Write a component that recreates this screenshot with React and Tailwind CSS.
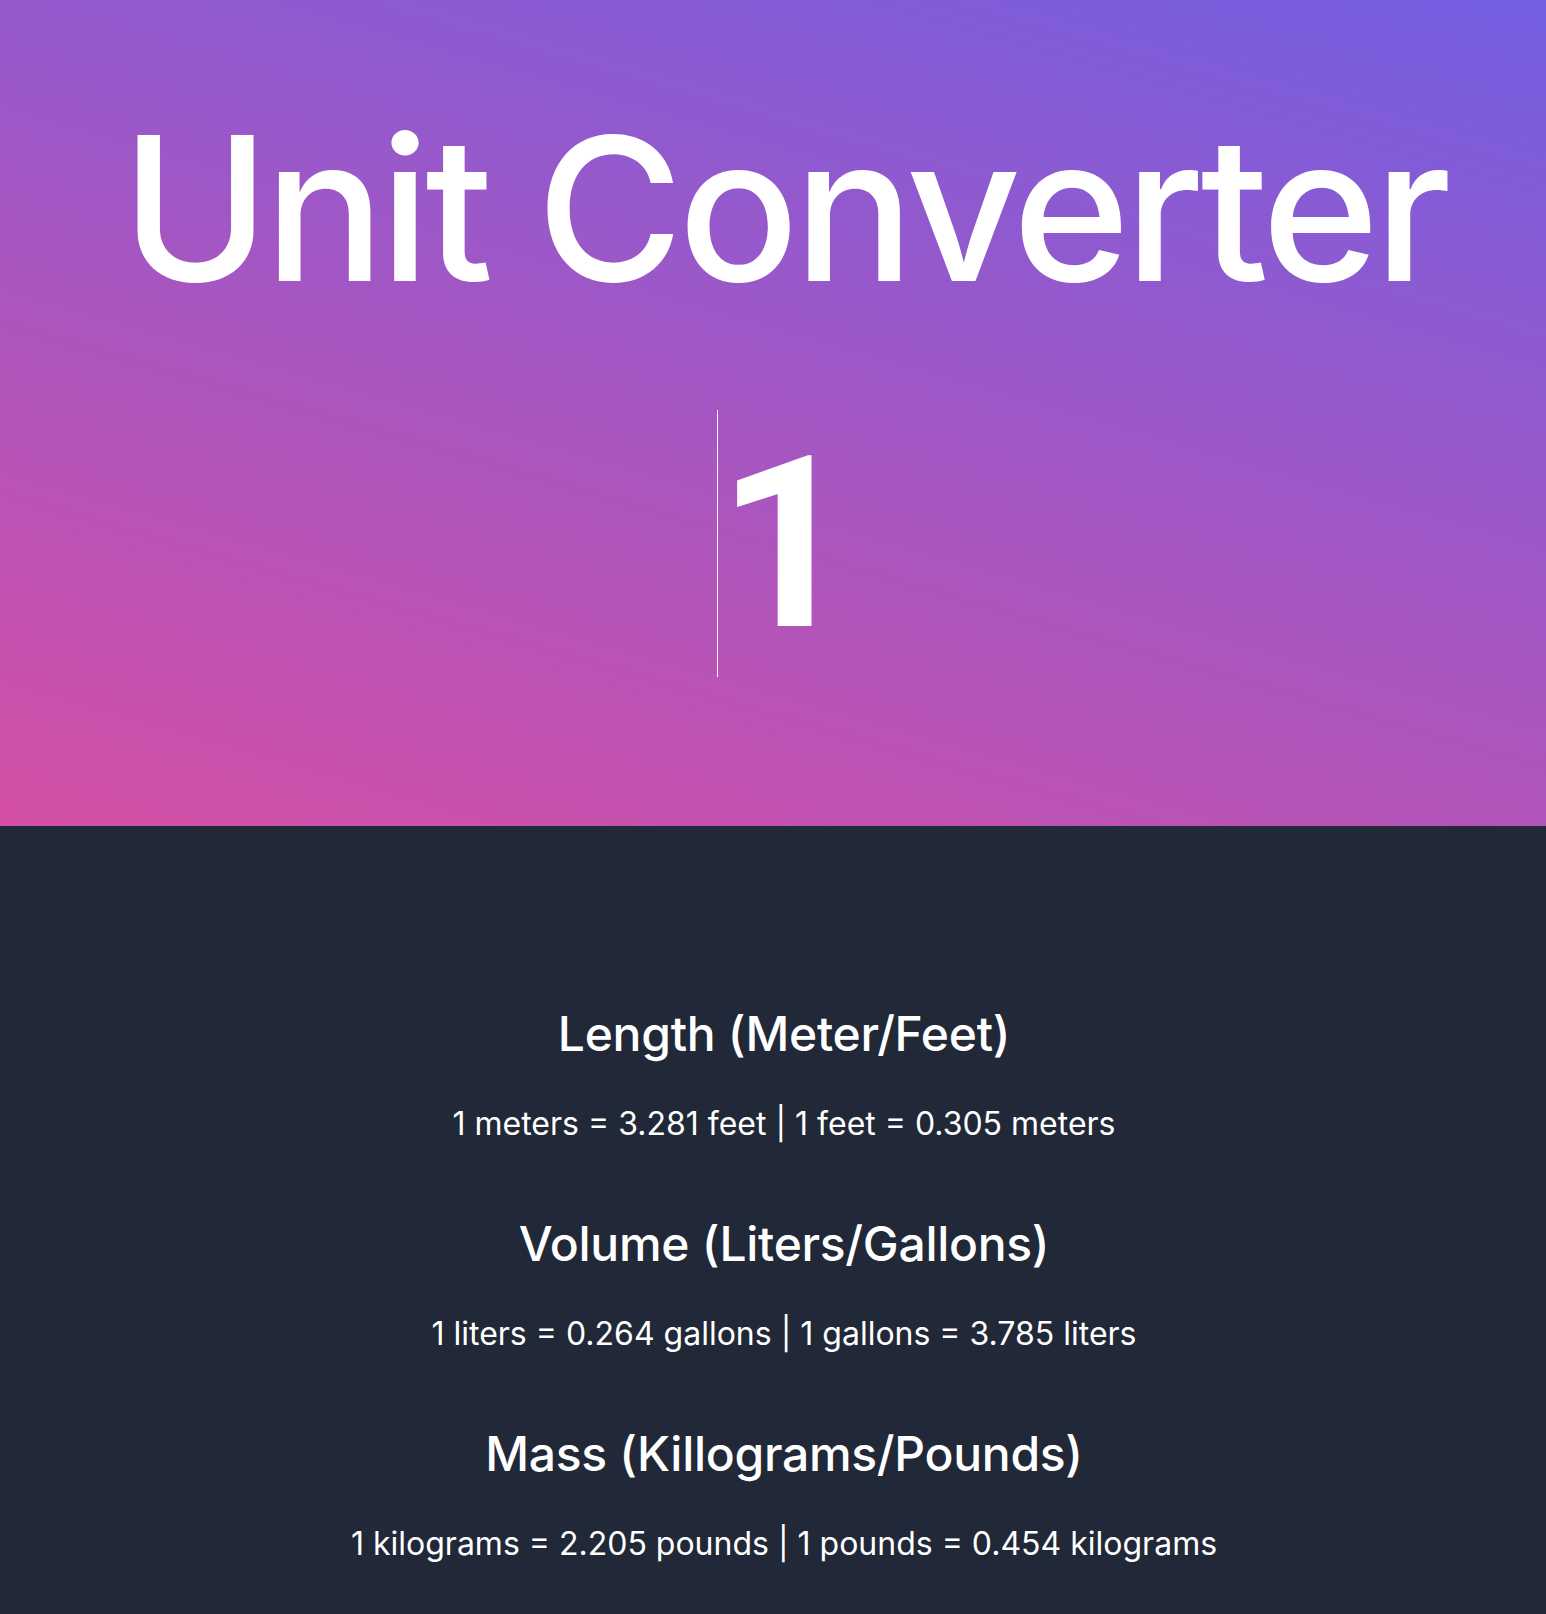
import { useState } from "react";

const units = [
  { title: "Length (Meter/Feet)", a: "meters", b: "feet", ab: 3.281, ba: 0.305 },
  { title: "Volume (Liters/Gallons)", a: "liters", b: "gallons", ab: 0.264, ba: 3.785 },
  { title: "Mass (Killograms/Pounds)", a: "kilograms", b: "pounds", ab: 2.205, ba: 0.454 },
];

function App() {
  const [value, setValue] = useState("1");
  const n = Number(value) || 0;

  return (
    <div className="min-h-screen bg-[#212837] text-white font-['Inter','Noto_Sans',sans-serif]">
      {/* Header */}
      <header className="h-[826px] bg-[linear-gradient(16deg,#d44fa5,#735ee1)] pl-[22px] pt-[108px] flex flex-col items-center">
        <h1 className="text-[200px] leading-[200px] font-medium tracking-[-0.025em]">Unit Converter</h1>
        <div className="mt-[102px] flex items-start justify-center font-['Roboto',sans-serif]">
          {/* text caret */}
          <span aria-hidden="true" className="w-px h-[267px] bg-white"></span>
          <input
            type="text"
            value={value}
            onChange={(e) => setValue(e.target.value)}
            className="w-[134px] h-[268px] p-0 bg-transparent text-left text-white caret-transparent outline-none border-none text-[240px] leading-[268px] font-bold"
          />
        </div>
      </header>

      {/* Results */}
      <main className="pl-[22px] pt-[184px] pb-[60px] flex flex-col items-center gap-[78px]">
        {units.map((u) => (
          <section key={u.title} className="flex flex-col items-center">
            <h2 className="text-[48px] leading-[48px] font-medium tracking-[-0.006em]">{u.title}</h2>
            <p className="mt-[48px] text-[32px] leading-[36px]">
              {n} {u.a} = {(n * u.ab).toFixed(3)} {u.b} | {n} {u.b} = {(n * u.ba).toFixed(3)} {u.a}
            </p>
          </section>
        ))}
      </main>
    </div>
  );
}

export default App;
